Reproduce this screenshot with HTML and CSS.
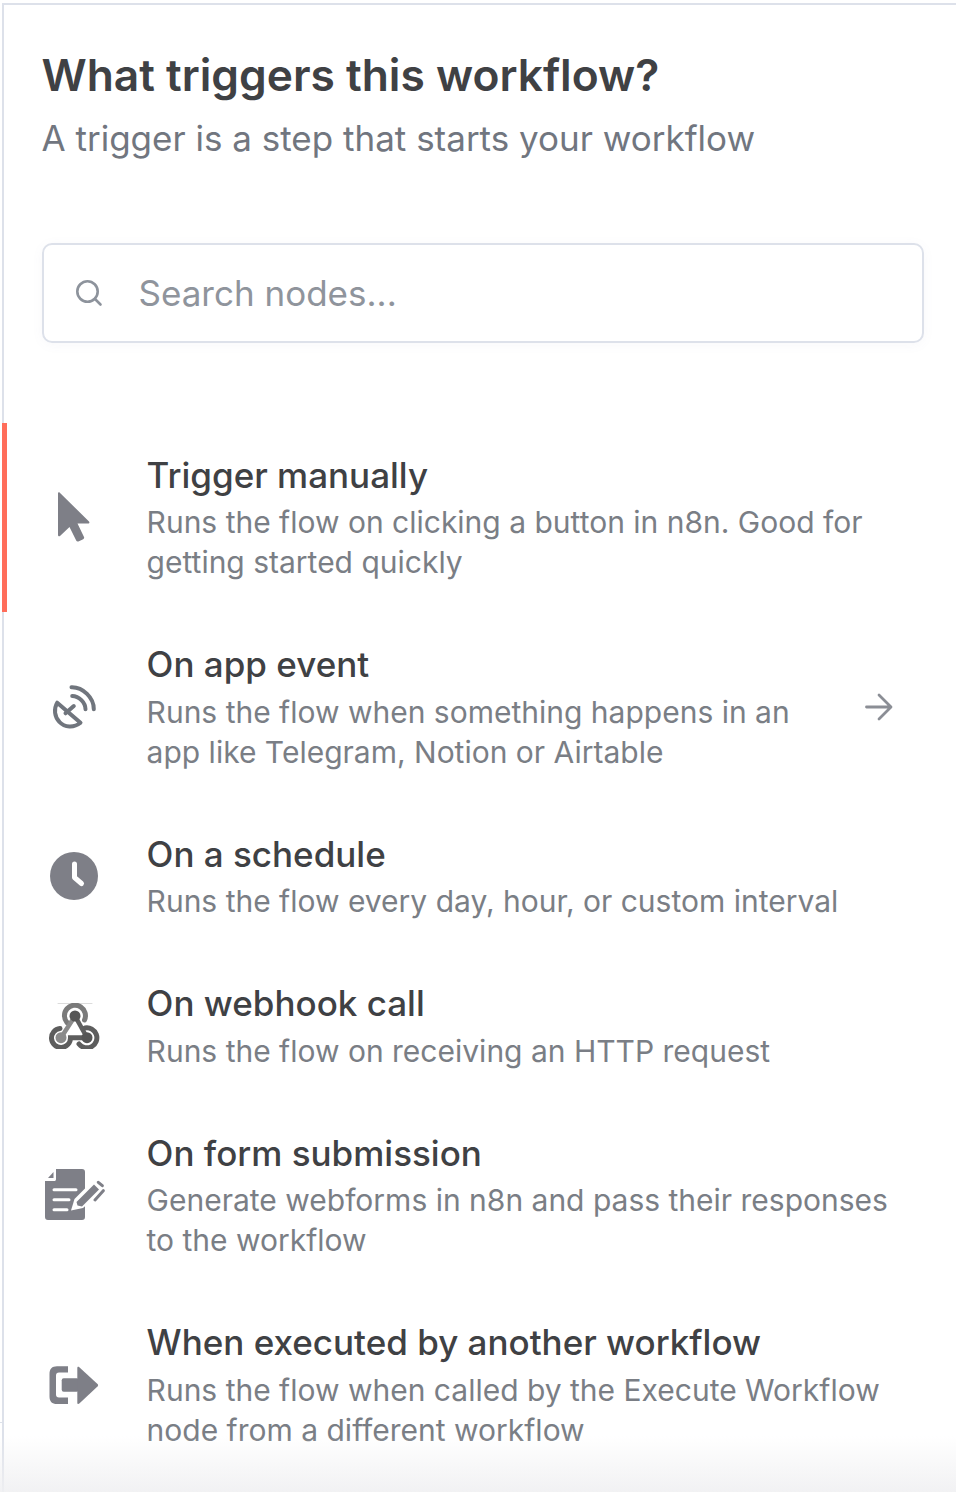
FILE: index.html
```html
<!DOCTYPE html>
<html lang="en">
<head>
<meta charset="utf-8">
<title>What triggers this workflow?</title>
<link rel="stylesheet" href="styles.css">
</head>
<body>
<div class="tick"></div>
<main class="panel">
  <header class="head">
    <h1 class="title">What triggers this workflow?</h1>
    <p class="subtitle">A trigger is a step that starts your workflow</p>
  </header>
  <div class="search">
    <svg class="search-icon" viewBox="0 0 28 28" fill="none" stroke="#8d939c" stroke-width="2.6" stroke-linecap="round"><circle cx="12.5" cy="12.5" r="10.2"/><path d="M20 20l5.500 5.500"/></svg>
    <span class="search-text">Search nodes...</span>
  </div>
  <ul class="list">
    <li class="row active">
      <div class="icon"><svg width="34" height="52" viewBox="0 0 34 52"><path d="M1 2.500c0-1 1-1.500 1.800-.8L32 30.500c.8.800.3 2-.8 2H20.500l6.500 13.500c.4.900 0 1.800-.8 2.200l-4.800 2.200c-.9.400-1.800 0-2.200-.8L12.500 36 3 45c-.8.700-2 .2-2-.9z" fill="#7e7f87"/></svg></div>
      <div class="text"><h2 class="name">Trigger manually</h2><p class="desc">Runs the flow on clicking a button in n8n. Good for getting started quickly</p></div>
    </li>
    <li class="row">
      <div class="icon"><svg width="46" height="46" viewBox="0 0 46 46" fill="none" stroke="#70757d" stroke-width="4" stroke-linecap="round" stroke-linejoin="round"><path d="M6.200 18.700 29.500 38.700C23 44 13.500 43.500 8.500 38 3.500 33 2.500 25 6.200 18.700z"/><path d="M14.500 29.300 22.800 22"/><path d="M21.200 12C28 12 34.500 18.500 34.500 25.300"/><path d="M20.500 3.300C32 3 43 14 42.800 25.300"/></svg></div>
      <div class="text narrow"><h2 class="name">On app event</h2><p class="desc">Runs the flow when something happens in an app like Telegram, Notion or Airtable</p></div>
      <svg class="arrow" width="28" height="28" viewBox="0 0 28 28" fill="none" stroke="#8b8e95" stroke-width="2.8" stroke-linecap="round" stroke-linejoin="round"><path d="M1.500 14h24M14 2l12 12-12 12"/></svg>
    </li>
    <li class="row">
      <div class="icon"><svg width="48" height="48" viewBox="0 0 48 48"><circle cx="24" cy="24" r="24" fill="#7e7f87"/><path d="M24.500 12v13.500l7 6" fill="none" stroke="#fff" stroke-width="5" stroke-linecap="round" stroke-linejoin="round"/></svg></div>
      <div class="text"><h2 class="name">On a schedule</h2><p class="desc">Runs the flow every day, hour, or custom interval</p></div>
    </li>
    <li class="row">
      <div class="icon"><svg class="nudge" width="52" height="46" viewBox="0 0 52 46" fill="none" stroke-linecap="round"><path d="M9 .5h34" stroke="#dcdcdc" stroke-width="1"/><path d="M18 19.500A10.500 10.500 0 1 1 35.500 17" stroke="#7a7a7a" stroke-width="5"/><path d="M26 13 12 34.700" stroke="#8a8a8a" stroke-width="4.500"/><path d="M26 13l12 21.700" stroke="#5f5f5f" stroke-width="4.500"/><path d="M11 25.500A9.500 9.500 0 1 0 21.500 34.700H38" stroke="#5d5d5d" stroke-width="5"/><path d="M36 25A10 10 0 1 1 30 41" stroke="#5d5d5d" stroke-width="5"/><circle cx="26" cy="13" r="5.500" fill="#555"/><circle cx="12" cy="34.700" r="5.500" fill="#8a8a8a"/><circle cx="38" cy="34.700" r="5.500" fill="#555"/></svg></div>
      <div class="text"><h2 class="name">On webhook call</h2><p class="desc">Runs the flow on receiving an HTTP request</p></div>
    </li>
    <li class="row">
      <div class="icon"><svg class="nudge" width="60" height="52" viewBox="0 0 60 52"><path d="M11 0h26c2 0 3 1 3 3v45c0 2-1 3-3 3H3c-2 0-3-1-3-3V12h9c1.500 0 2-.5 2-2z" fill="#7e7f87"/><path d="M8.500 3v6H3z" fill="#7e7f87"/><path d="M9 20.700h22M9 30.700h15M9 40.700h13" stroke="#fff" stroke-width="3" stroke-linecap="round"/><path d="M26 41.500 29.500 30 47 12.500 57 22 38 39z" fill="#fff"/><path d="M32.500 36.500l-1-3.500L49 15.500l5 5L37 37.500z" fill="#7e7f87"/><path d="M53.300 13.300l4 3.400M58.300 21.700 50 31" stroke="#7e7f87" stroke-width="3" fill="none" stroke-linecap="round"/></svg></div>
      <div class="text"><h2 class="name">On form submission</h2><p class="desc">Generate webforms in n8n and pass their responses to the workflow</p></div>
    </li>
    <li class="row">
      <div class="icon"><svg width="50" height="38" viewBox="0 0 50 38"><path d="M19 .3H8C3 .3.500 3 .500 8v22.500C.5 35.500 3 38 8 38h11v-6.500H10c-2 0-3-1-3-3V9.500c0-2 1-3 3-3h9z" fill="#7e7f87"/><rect x="12.700" y="12.300" width="17" height="13.400" rx="2" fill="#7e7f87"/><path d="M28.300 2c0-1.200 1-1.700 2-.8L48.500 18c.8.800.8 1.600 0 2.400L30.300 37.500c-1 .9-2 .4-2-.8z" fill="#7e7f87"/></svg></div>
      <div class="text"><h2 class="name">When executed by another workflow</h2><p class="desc">Runs the flow when called by the Execute Workflow node from a different workflow</p></div>
    </li>
  </ul>
</main>
<div class="fade"></div>
</body>
</html>
```

FILE: styles.css
```css
* { box-sizing: border-box; }
html, body { margin: 0; height: 1492px; overflow: hidden; background: #fff; }
body { position: relative; padding: 3px 0 0 2px; font-family: Inter, "Noto Sans", sans-serif; }
.panel {
  height: 1489px;
  border-top: 2px solid #dde1ea;
  border-left: 2px solid #dde1ea;
}
.head { padding: 42px 32px 0 37.5px; }
.title { margin: 0; font-size: 44.3px; line-height: 56px; font-weight: 600; color: #3f4144; white-space: nowrap; }
.subtitle { margin: 13px 0 0; font-size: 35px; line-height: 44px; font-weight: 400; color: #71767f; white-space: nowrap; }
.search {
  margin: 83px 32px 0 38px;
  height: 100px;
  border: 2px solid #dde1ea;
  border-radius: 10px;
  display: flex;
  align-items: center;
  padding-left: 32px;
  box-shadow: 0 2px 12px rgba(120, 125, 150, 0.05);
}
.search-icon { width: 28px; height: 28px; flex: none; margin-left: -1px; }
.search-text { margin-left: 35.5px; font-size: 35px; color: #8f949c; white-space: nowrap; }
.list { list-style: none; margin: 79.5px 0 0; padding: 0; }
.row { display: flex; align-items: center; padding: 30px 63px 30px 0; position: relative; }
.row.active::before { content: ""; position: absolute; left: -2px; top: 0; bottom: 0; width: 5px; background: #ff6d5a; }
.icon { width: 142.6px; flex: none; display: flex; justify-content: center; padding-right: 3.6px; }
.nudge { margin-left: 2px; }
.text { flex: 1; min-width: 0; }
.narrow { padding-right: 30px; }
.name { margin: 0; font-size: 35px; line-height: 44px; font-weight: 500; color: #3f4144; white-space: nowrap; }
.desc { margin: 5.5px 0 0; font-size: 30px; line-height: 40px; font-weight: 400; color: #7a7e85; }
.arrow { flex: none; }
.tick { position: absolute; left: 0; top: 1422px; width: 2px; height: 1px; background: #dde1ea; }
.fade { position: absolute; left: 0; right: 0; bottom: 0; height: 56px; background: linear-gradient(rgba(240, 240, 242, 0), rgba(240, 240, 242, 0.9)); pointer-events: none; }
```
